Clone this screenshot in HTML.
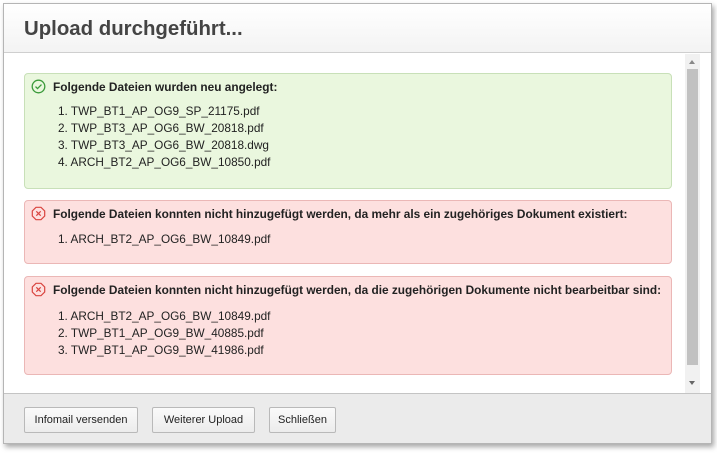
<!DOCTYPE html>
<html><head><meta charset="utf-8"><style>
body{margin:0;width:717px;height:460px;background:#fff;font-family:"Liberation Sans",Arial,sans-serif;position:relative;overflow:hidden}
.dlg{position:absolute;left:3px;top:3px;width:707px;height:439px;border:1px solid #b5b5b5;box-shadow:2px 3px 5px rgba(0,0,0,.35);background:#fff}
.hd{position:absolute;left:0;top:0;right:0;height:48px;background:linear-gradient(#fff,#f3f3f3);border-bottom:1px solid #cfcfcf}
.hd h1{margin:0;position:absolute;left:20px;top:14px;font-size:20.4px;font-weight:bold;color:#444}
.ft{position:absolute;left:0;bottom:0;right:0;height:49px;background:#ebebeb;border-top:1px solid #c4c4c4}
.btn{position:absolute;top:13px;height:24px;border:1px solid #b9b9b9;background:linear-gradient(#fafafa,#ececec);font-size:11px;color:#222;line-height:24px;text-align:center;border-radius:2px}
.sb{position:absolute;left:681px;top:50px;width:15px;height:339px;background:#f1f1f1}
.th{position:absolute;left:2px;top:15px;width:11px;height:296px;background:#c1c1c1}
.box{position:absolute;left:20px;width:646px;border:1px solid;border-radius:4px;font-size:11.8px;color:#222}
.g{background:#eaf7de;border-color:#c8e0b8}
.r{background:#fde0df;border-color:#ebb7b6}
.t{position:absolute;left:28px;top:6px;font-weight:bold;white-space:nowrap;font-size:11.85px}
.ic{position:absolute;left:6px;top:5px}
ol{margin:0;padding:0;position:absolute;left:33px;list-style:none}
li{height:17px;line-height:17px}
</style></head><body>
<div class="dlg">
<div class="hd"><h1>Upload durchgeführt...</h1></div>
<div class="sb"><div style="position:absolute;left:4px;top:6px;border:3.5px solid transparent;border-bottom:4px solid #888;border-top:0"></div><div class="th"></div><div style="position:absolute;left:4px;top:327px;border:3.5px solid transparent;border-top:4px solid #666;border-bottom:0"></div></div>
<div class="box g" style="top:69px;height:114px">
<svg class="ic" width="15" height="15" viewBox="0 0 15 15"><circle cx="7.5" cy="7.5" r="6.3" fill="none" stroke="#3a9a3a" stroke-width="1.3"/><path d="M4.5 7.6l2 2 4-4" fill="none" stroke="#3a9a3a" stroke-width="1.3"/></svg>
<div class="t">Folgende Dateien wurden neu angelegt:</div>
<ol style="top:29px"><li>1. TWP_BT1_AP_OG9_SP_21175.pdf</li><li>2. TWP_BT3_AP_OG6_BW_20818.pdf</li><li>3. TWP_BT3_AP_OG6_BW_20818.dwg</li><li>4. ARCH_BT2_AP_OG6_BW_10850.pdf</li></ol>
</div>
<div class="box r" style="top:196px;height:62px">
<svg class="ic" width="15" height="15" viewBox="0 0 15 15"><path d="M5 1.3h5l3.7 3.7v5L10 13.7H5L1.3 10V5z" fill="none" stroke="#d9443f" stroke-width="1.2"/><path d="M5.3 5.3l4.4 4.4M9.7 5.3l-4.4 4.4" stroke="#d9443f" stroke-width="1.2"/></svg>
<div class="t">Folgende Dateien konnten nicht hinzugefügt werden, da mehr als ein zugehöriges Dokument existiert:</div>
<ol style="top:30px"><li>1. ARCH_BT2_AP_OG6_BW_10849.pdf</li></ol>
</div>
<div class="box r" style="top:272px;height:97px">
<svg class="ic" width="15" height="15" viewBox="0 0 15 15"><path d="M5 1.3h5l3.7 3.7v5L10 13.7H5L1.3 10V5z" fill="none" stroke="#d9443f" stroke-width="1.2"/><path d="M5.3 5.3l4.4 4.4M9.7 5.3l-4.4 4.4" stroke="#d9443f" stroke-width="1.2"/></svg>
<div class="t">Folgende Dateien konnten nicht hinzugefügt werden, da die zugehörigen Dokumente nicht bearbeitbar sind:</div>
<ol style="top:31px"><li>1. ARCH_BT2_AP_OG6_BW_10849.pdf</li><li>2. TWP_BT1_AP_OG9_BW_40885.pdf</li><li>3. TWP_BT1_AP_OG9_BW_41986.pdf</li></ol>
</div>
<div class="ft">
<div class="btn" style="left:20px;width:112px">Infomail versenden</div>
<div class="btn" style="left:148px;width:101px">Weiterer Upload</div>
<div class="btn" style="left:265px;width:65px">Schließen</div>
</div>
</div>
</body></html>
